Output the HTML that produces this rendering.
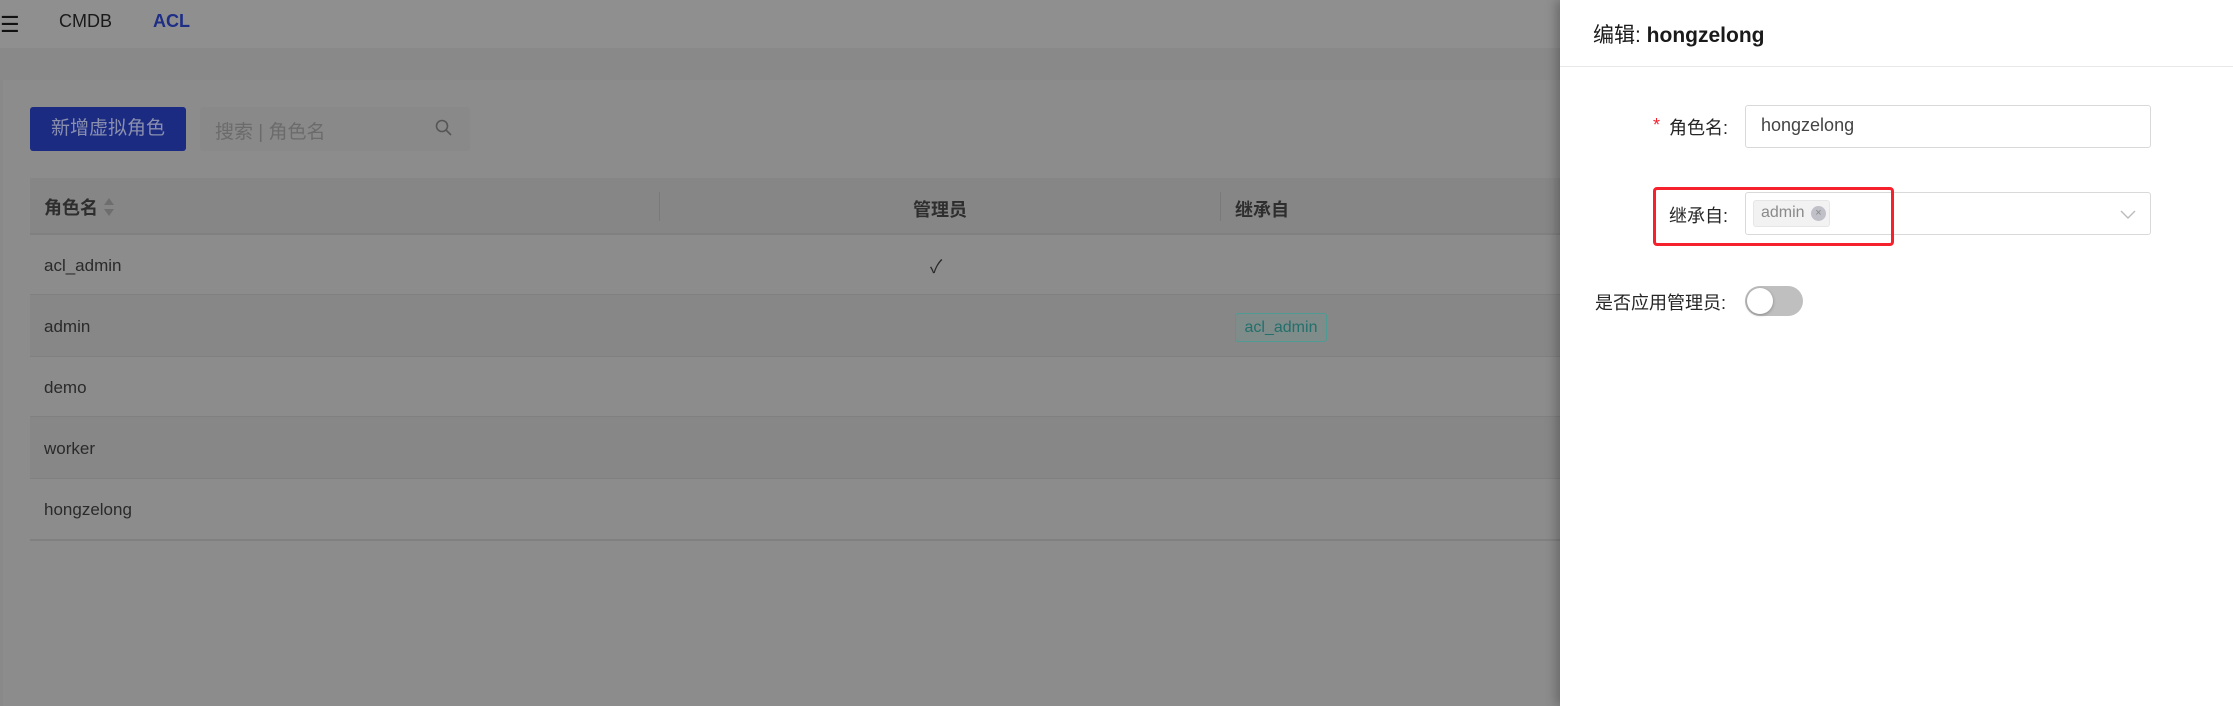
<!DOCTYPE html>
<html><head><meta charset="utf-8"><style>
*{margin:0;padding:0;box-sizing:border-box}
body{width:2233px;height:706px;overflow:hidden;background:#898989;font-family:"Liberation Sans","Noto Sans CJK SC",sans-serif;position:relative;color:#262626}
.a{position:absolute}
.nav{left:0;top:0;width:1560px;height:48px;background:#8f8f8f}
.card{left:3px;top:80px;width:1557px;height:626px;background:#8c8c8c}
.t{font-size:18px;white-space:nowrap}
.s{font-size:17px}
.line{height:2px;background:#808080;left:30px;width:1530px}
.drawer{left:1560px;top:0;width:673px;height:706px;background:#fff;box-shadow:-4px 0 10px rgba(0,0,0,.25)}
</style></head><body>
<div class="a nav"></div>
<div class="a" style="left:0;top:12px;font-size:22px;color:#111">☰</div>
<div class="a t" style="left:59px;top:11px;color:#1a1a1a">CMDB</div>
<div class="a t" style="left:153px;top:11px;color:#1e2d86;font-weight:bold">ACL</div>
<div class="a card"></div>
<div class="a" style="left:30px;top:107px;width:156px;height:44px;background:#1b2b82;border-radius:3px;color:#8a8fae;font-size:19px;text-align:center;line-height:44px">新增虚拟角色</div>
<div class="a" style="left:200px;top:107px;width:270px;height:44px;background:#898989;border-radius:3px"></div>
<div class="a t" style="left:215px;top:117px;color:#6b6b6b;font-size:19px">搜索 | 角色名</div>
<svg class="a" style="left:434px;top:118px" width="20" height="20" viewBox="0 0 20 20"><circle cx="8" cy="8" r="5.5" fill="none" stroke="#555" stroke-width="1.6"/><path d="M12 12l5 5" stroke="#555" stroke-width="1.6"/></svg>
<div class="a" style="left:30px;top:178px;width:1530px;height:57px;background:#868686"></div>
<div class="a line" style="top:233px"></div>
<div class="a" style="left:659px;top:192px;width:1px;height:29px;background:#7a7a7a"></div>
<div class="a" style="left:1220px;top:192px;width:1px;height:29px;background:#7a7a7a"></div>
<div class="a t" style="left:44px;top:194px;font-weight:bold;color:#2e2e2e">角色名</div>
<svg class="a" style="left:102px;top:196px" width="14" height="22"><path d="M7 2l5 7H2z" fill="#6e6e6e"/><path d="M7 20l5-7H2z" fill="#6e6e6e"/></svg>
<div class="a t" style="left:913px;top:196px;font-weight:bold;color:#2e2e2e">管理员</div>
<div class="a t" style="left:1235px;top:196px;font-weight:bold;color:#2e2e2e">继承自</div>
<div class="a" style="left:30px;top:295px;width:1530px;height:62px;background:#878787"></div>
<div class="a" style="left:30px;top:417px;width:1530px;height:62px;background:#878787"></div>
<div class="a line" style="top:294px;height:1px"></div>
<div class="a line" style="top:356px;height:1px"></div>
<div class="a line" style="top:416px;height:1px"></div>
<div class="a line" style="top:478px;height:1px"></div>
<div class="a line" style="top:539px;height:2px"></div>
<div class="a t s" style="left:44px;top:256px;color:#2a2a2a">acl_admin</div>
<div class="a t" style="left:930px;top:253px;color:#2a2a2a">✓</div>
<div class="a t s" style="left:44px;top:317px;color:#2a2a2a">admin</div>
<div class="a" style="left:1235px;top:313px;width:92px;height:29px;border:1px solid #4f9a93;background:#7f8c8a;border-radius:3px;color:#236f6b;font-size:16px;text-align:center;line-height:27px">acl_admin</div>
<div class="a t s" style="left:44px;top:378px;color:#2a2a2a">demo</div>
<div class="a t s" style="left:44px;top:439px;color:#2a2a2a">worker</div>
<div class="a t s" style="left:44px;top:500px;color:#2a2a2a">hongzelong</div>

<div class="a drawer"></div>
<div class="a" style="left:1593px;top:19px;font-size:21px;color:#1a1a1a">编辑: <span style="font-weight:600">hongzelong</span></div>
<div class="a" style="left:1560px;top:66px;width:673px;height:1px;background:#e8e8e8"></div>
<div class="a t" style="left:1653px;top:115px;color:#f5222d">*</div>
<div class="a t" style="left:1669px;top:114px;color:#262626">角色名:</div>
<div class="a" style="left:1745px;top:105px;width:406px;height:43px;border:1px solid #d9d9d9;border-radius:3px"></div>
<div class="a t" style="left:1761px;top:115px;color:#444">hongzelong</div>
<div class="a t" style="left:1669px;top:202px;color:#262626">继承自:</div>
<div class="a" style="left:1745px;top:192px;width:406px;height:43px;border:1px solid #d9d9d9;border-radius:3px"></div>
<div class="a" style="left:1753px;top:200px;width:77px;height:27px;background:#f2f2f2;border:1px solid #e6e6e6;border-radius:3px"></div>
<div class="a" style="left:1761px;top:204px;font-size:16px;color:#8a8a8a">admin</div>
<div class="a" style="left:1811px;top:206px;width:15px;height:15px;border-radius:50%;background:#c0c0c8;color:#888;font-size:11px;text-align:center;line-height:15px">×</div>
<svg class="a" style="left:2119px;top:208px" width="18" height="12"><path d="M2 3l7 7 7-7" fill="none" stroke="#bbb" stroke-width="1.4"/></svg>
<div class="a" style="left:1653px;top:187px;width:241px;height:59px;border:3px solid #f5222d;border-radius:4px"></div>
<div class="a t" style="left:1595px;top:289px;color:#262626">是否应用管理员:</div>
<div class="a" style="left:1745px;top:286px;width:58px;height:30px;border-radius:15px;background:#bfbfbf"></div>
<div class="a" style="left:1747px;top:288px;width:26px;height:26px;border-radius:50%;background:#fff;box-shadow:0 1px 3px rgba(0,0,0,.3)"></div>
</body></html>
